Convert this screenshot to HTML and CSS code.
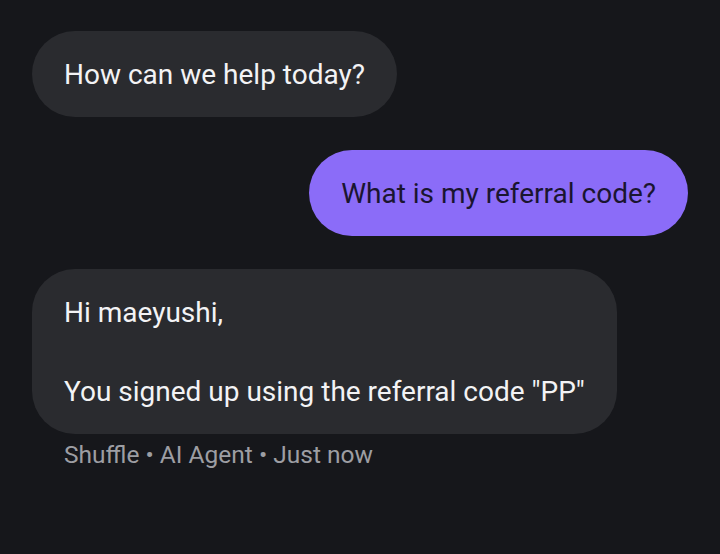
FILE: index.html
```html
<!DOCTYPE html>
<html>
<head>
<meta charset="utf-8">
<link rel="stylesheet" href="styles.css">
</head>
<body>
<main class="chat">
  <div class="msg agent">
    <div class="bubble">How can we help today?</div>
  </div>
  <div class="msg user">
    <div class="bubble">What is my referral code?</div>
  </div>
  <div class="msg agent">
    <div class="bubble">Hi maeyushi,<br><br>You signed up using the referral code "PP"</div>
    <div class="meta">Shuffle • AI Agent • Just now</div>
  </div>
</main>
</body>
</html>
```
FILE: styles.css
```css
html, body {
  margin: 0;
  padding: 0;
  background: #16171b;
  height: 100%;
}
body {
  font-family: Roboto, "Noto Sans", sans-serif;
  -webkit-font-smoothing: antialiased;
}
.chat {
  display: flex;
  flex-direction: column;
  gap: 33px;
  padding: 31px 32px;
}
.msg {
  display: flex;
  flex-direction: column;
  align-items: flex-start;
}
.msg.user {
  align-items: flex-end;
}
.bubble {
  font-size: 28px;
  line-height: 39.5px;
  padding: 23.5px 32px 23px;
  border-radius: 43px;
  background: #2a2b2f;
  color: #f3f3f5;
}
.msg.user .bubble {
  background: #8b6cf8;
  color: #1a1530;
}
.meta {
  margin-top: 7px;
  padding-left: 32px;
  font-size: 24.5px;
  line-height: 28px;
  color: #9d9ea3;
}
```
